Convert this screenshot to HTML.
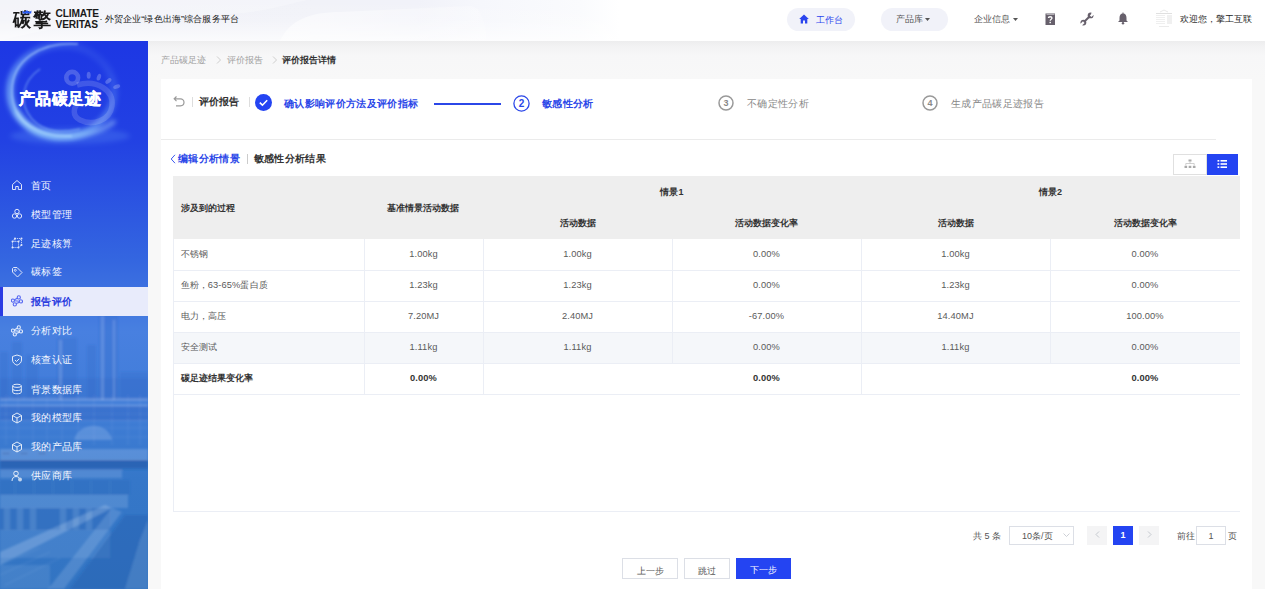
<!DOCTYPE html>
<html><head><meta charset="utf-8">
<style>
*{margin:0;padding:0;box-sizing:border-box}
html,body{width:1265px;height:589px;overflow:hidden;background:#f6f6f7;font-family:"Liberation Sans",sans-serif;color:#333}
.abs{position:absolute}
#hdr{position:absolute;left:0;top:0;width:1265px;height:41px;background:linear-gradient(180deg,rgba(255,255,255,0) 0%,rgba(255,255,255,.15) 50%,rgba(255,255,255,.7) 100%),linear-gradient(90deg,#eff0f7 0%,#f1f2f8 25%,#f1f2f9 33%,#f6f7fc 38%,#fafbfd 46%,#fff 49%,#fff 100%);overflow:hidden}
#side{position:absolute;left:0;top:41px;width:148px;height:548px;background:linear-gradient(180deg,#1d37e4 0%,#2241e3 18%,#3466e0 40%,#4880e0 53%,#417dd8 66%,#3577c9 80%,#3274c2 100%);overflow:hidden}
#main{position:absolute;left:148px;top:41px;width:1117px;height:548px;background:linear-gradient(180deg,#ededee 0px,#f3f3f4 6px,#f7f7f8 14px,#f8f8f8 40px)}
.nav{position:absolute;left:0;width:148px;height:29px;color:#f4f7ff;font-size:10px;line-height:29px;letter-spacing:0.3px}
.nav span{position:absolute;left:31px}
.nav svg{position:absolute;left:11px;top:8.5px;opacity:.85}
.nav.act{background:#e8ebfb;color:#2a3bdf;font-weight:bold}
.nav.act:before{content:"";position:absolute;left:0;top:0;width:3px;height:29px;background:#2a3be3}
#card{position:absolute;left:161px;top:79px;width:1091px;height:510px;background:#fff}
table{border-collapse:collapse;table-layout:fixed}
.th,.thc{font-size:9px;line-height:12px;font-weight:bold;color:#333}
.thc{text-align:center}
.td,.tdc{font-size:9.3px;line-height:12px;color:#5a5a5a;letter-spacing:0.1px}
.tdc{text-align:center}
.b{font-weight:bold;color:#333}
.btn{font-size:9px;line-height:24px;text-align:center}
</style></head><body>
<div id="hdr">
  <svg class="abs" style="left:0;top:0" width="1265" height="41"><defs><linearGradient id="hg" x1="0" y1="0" x2="1" y2="0"><stop offset="0" stop-color="#fff" stop-opacity=".55"/><stop offset="1" stop-color="#fff" stop-opacity=".2"/></linearGradient></defs><path d="M0 41 C40 30 90 22 150 18 L230 14 C270 12 300 0 310 0 L0 0 Z" fill="#fff" fill-opacity=".25"/><path d="M280 41 C290 20 310 12 340 12 L470 6 C480 6 485 20 487 41 Z" fill="url(#hg)"/></svg>
  <div class="abs" style="left:12.5px;top:8.5px;font-size:18px;font-weight:bold;color:#1a1a1a;letter-spacing:2px;line-height:22px;transform:scaleY(1.05)">碳擎</div>
  <svg class="abs" style="left:21.5px;top:10px" width="10" height="4" viewBox="0 0 10 4"><path d="M0.5 0.5 L0.8 3.5 H9.2 L9.5 0.5 L7.5 2 L5 0.3 L2.5 2 Z" fill="#2a5cf5"/></svg>
  <div class="abs" style="left:55.5px;top:9.3px;font-size:10.2px;line-height:10.3px;color:#1a1a1a;font-weight:bold;letter-spacing:-0.15px">CLIMATE<br>VERITAS</div>
  <div class="abs" style="left:99.5px;top:13px;font-size:9px;line-height:12px;color:#1a1a1a;white-space:nowrap;letter-spacing:0.15px">·<span style="margin-left:2px">外贸企业“绿色出海”综合服务平台</span></div>

  <div class="abs" style="left:787px;top:8px;width:68px;height:23px;border-radius:11.5px;background:#f1f2f9"></div>
  <svg class="abs" style="left:799px;top:14px" width="10" height="10" viewBox="0 0 10 10"><path d="M5 0.5 L9.8 5 H8.3 V9.5 H6 V6.5 H4 V9.5 H1.7 V5 H0.2 Z" fill="#2b45ee"/></svg>
  <div class="abs" style="left:816px;top:13.5px;font-size:9px;line-height:12px;color:#2b45ee;letter-spacing:0.2px">工作台</div>
  <div class="abs" style="left:881px;top:8px;width:67px;height:23px;border-radius:11.5px;background:#f1f2f9"></div>
  <div class="abs" style="left:896px;top:13px;font-size:9px;line-height:12px;color:#555">产品库</div>
  <svg class="abs" style="left:924.5px;top:17.5px" width="5" height="4"><path d="M0 0 H5 L2.5 3 Z" fill="#555"/></svg>
  <div class="abs" style="left:974px;top:13px;font-size:9px;line-height:12px;color:#555">企业信息</div>
  <svg class="abs" style="left:1012.5px;top:17.5px" width="5" height="4"><path d="M0 0 H5 L2.5 3 Z" fill="#555"/></svg>
  <svg class="abs" style="left:1045px;top:13px" width="10" height="12" viewBox="0 0 10 12"><rect x="0.5" y="0.5" width="9.5" height="11.5" fill="#67606c"/><rect x="1.5" y="1.2" width="8" height="0.7" fill="#fff" fill-opacity=".7"/><path d="M3.4 5 C3.4 3.3 7 3.3 7 5 C7 6.2 5.2 6.2 5.2 7.8" fill="none" stroke="#fff" stroke-width="1.3"/><rect x="4.5" y="8.8" width="1.4" height="1.4" fill="#fff"/></svg>
  <svg class="abs" style="left:1080px;top:12px" width="14" height="14" viewBox="0 0 14 14"><path d="M3.5 10.5 L10.5 3.5" stroke="#67606c" stroke-width="2"/><circle cx="10.6" cy="3.4" r="2.9" fill="#67606c"/><circle cx="3.4" cy="10.6" r="2.9" fill="#67606c"/><path d="M10.6 3.4 L13.5 0.5 L14 2.8 Z M10.6 3.4 L13.2 0 L11.8 0 Z" fill="#fff"/><rect x="10.2" y="-1" width="2.2" height="5" fill="#fff" transform="rotate(45 10.6 3.4)"/><rect x="2.2" y="10" width="2.2" height="5" fill="#fff" transform="rotate(45 3.4 10.6)"/></svg>
  <svg class="abs" style="left:1117px;top:12px" width="12" height="13" viewBox="0 0 12 13"><path d="M6 1.5 C3.5 1.5 2.5 3.5 2.5 6 V8.5 L1 10 H11 L9.5 8.5 V6 C9.5 3.5 8.5 1.5 6 1.5 Z" fill="#67606c"/><circle cx="6" cy="11.3" r="1.2" fill="#67606c"/><rect x="5.4" y="0.6" width="1.2" height="1.2" fill="#67606c"/></svg>
  <svg class="abs" style="left:1155px;top:9px" width="18" height="20" viewBox="0 0 18 20"><path d="M5 3 L9 1 L13 3" fill="none" stroke="#d0d0d0" stroke-width="0.5"/><rect x="1" y="4" width="16" height="1" fill="#e0e0e0"/><g fill="#ececec"><rect x="1" y="6" width="9" height="0.8"/><rect x="1" y="8" width="9" height="0.8"/><rect x="1" y="10" width="9" height="0.8"/><rect x="1" y="12" width="9" height="0.8"/><rect x="1" y="14" width="9" height="0.8"/><rect x="12" y="6" width="5" height="9" fill="#f0f0f0"/></g><rect x="4" y="17" width="10" height="0.8" fill="#e6e6e6"/></svg>
  <div class="abs" style="left:1180px;top:13px;font-size:9px;line-height:12px;color:#333;white-space:nowrap">欢迎您，<span style="color:#222">擎工互联</span></div>
</div>

<div id="side">
  <!-- photo overlay -->
  <svg class="abs" style="left:0;top:0" width="148" height="548" viewBox="0 0 148 548">
    <defs>
      <radialGradient id="glow" cx="0.5" cy="0.5" r="0.5">
        <stop offset="0.80" stop-color="#5aa8ff" stop-opacity="0"/>
        <stop offset="0.91" stop-color="#9ad6ff" stop-opacity="0.6"/>
        <stop offset="0.96" stop-color="#6fb8ff" stop-opacity="0.25"/>
        <stop offset="1" stop-color="#4f8fff" stop-opacity="0"/>
      </radialGradient>
      <radialGradient id="inner" cx="0.5" cy="0.5" r="0.5">
        <stop offset="0" stop-color="#1a30d8" stop-opacity="0.3"/>
        <stop offset="1" stop-color="#1a30d8" stop-opacity="0"/>
      </radialGradient>
      <linearGradient id="ph" x1="0" y1="0" x2="0" y2="1">
        <stop offset="0" stop-color="#3f78dc" stop-opacity="0"/>
        <stop offset="0.15" stop-color="#3f78dc" stop-opacity="1"/>
        <stop offset="1" stop-color="#3a7bd0" stop-opacity="1"/>
      </linearGradient>
    </defs>
    <filter id="blur2" x="-20%" y="-20%" width="140%" height="140%"><feGaussianBlur stdDeviation="2.5"/></filter>
    <filter id="blur1" x="-20%" y="-20%" width="140%" height="140%"><feGaussianBlur stdDeviation="0.8"/></filter>
    <linearGradient id="rg" x1="0" y1="1" x2="0.9" y2="0"><stop offset="0" stop-color="#9ad8ff" stop-opacity=".85"/><stop offset="0.5" stop-color="#8fd0ff" stop-opacity=".45"/><stop offset="1" stop-color="#8fd0ff" stop-opacity="0"/></linearGradient>
    <ellipse cx="62" cy="50" rx="52" ry="46" fill="none" stroke="url(#rg)" stroke-width="7" filter="url(#blur2)"/>
    <path d="M78 3 C40 0 12 20 12 50 C12 82 40 97 72 95" fill="none" stroke="#c8ecff" stroke-opacity=".6" stroke-width="1.4" filter="url(#blur1)"/>
    <path d="M16 70 C25 88 45 96 72 95 C90 94 105 88 115 80" fill="none" stroke="#b8e6ff" stroke-opacity=".65" stroke-width="3.5" filter="url(#blur2)"/>
    <path d="M40 28 C22 40 18 62 32 78 C45 92 62 92 80 88" fill="none" stroke="#aee0ff" stroke-opacity=".45" stroke-width="1.4" filter="url(#blur1)"/>
    <ellipse cx="70" cy="95" rx="60" ry="8" fill="#7fc0ff" fill-opacity=".18" filter="url(#blur2)"/>
    <circle cx="72.2" cy="36.8" r="5.9" fill="none" stroke="#fff" stroke-opacity=".2" stroke-width="4.6"/>
    <path d="M77 44 C98 38 114 50 112 65 C110 80 92 85 80 79 C72 75 73 66 79 62" fill="none" stroke="#fff" stroke-opacity=".15" stroke-width="5.5"/>
    <g fill="#fff" fill-opacity=".22">
      <ellipse cx="88.7" cy="34.3" rx="2" ry="3.5"/>
      <ellipse cx="98.9" cy="36.2" rx="2" ry="3.5" transform="rotate(20 98.9 36.2)"/>
      <ellipse cx="108.4" cy="40" rx="2" ry="3.6" transform="rotate(50 108.4 40)"/>
      <ellipse cx="116.7" cy="45.7" rx="2" ry="3.6" transform="rotate(70 116.7 45.7)"/>
    </g>
    <!-- refinery -->
    <g filter="url(#blur1)">
    
    <g fill="#2c5fc0" fill-opacity=".2">
      <rect x="99" y="273" width="19" height="86"/>
      <rect x="57" y="297" width="20" height="62"/>
      <rect x="87" y="304" width="9" height="55"/>
      <rect x="0" y="311" width="8" height="48"/>
      <rect x="12" y="301" width="10" height="58"/>
      <rect x="26" y="314" width="12" height="45"/>
      <rect x="120" y="331" width="28" height="28"/>
      <rect x="0" y="337" width="148" height="22"/>
    </g>
    <g fill="#dbe9ff" fill-opacity=".18">
      <rect x="101" y="275" width="3" height="84"/>
      <rect x="113" y="279" width="2" height="80"/>
      <rect x="59" y="299" width="3" height="60"/>
      <rect x="0" y="357" width="148" height="3"/>
      <rect x="0" y="363" width="148" height="2"/>
    </g>
    <rect x="0" y="365" width="148" height="14" fill="#2a5cb8" fill-opacity=".3"/>
    
    <g stroke="#e6f0ff" stroke-opacity=".10" stroke-width="0.8">
      <path d="M0 359 H148 M0 366 H148 M0 373 H148 M0 380 H148 M0 387 H148 M0 396 H148"/>
      <path d="M6 354 V404 M18 354 V404 M33 354 V404 M47 354 V404 M62 354 V404 M78 354 V404 M94 354 V404 M112 354 V404 M128 354 V404 M140 354 V404"/>
    </g>
    <path d="M74 399 C78 381 108 379 112 399 Z" fill="#e0ecff" fill-opacity=".18"/>
    <g fill="#1d4f9c" fill-opacity=".35">
      <rect x="2" y="411" width="8" height="3"/><rect x="20" y="411" width="8" height="3"/><rect x="38" y="411" width="8" height="3"/>
      <rect x="0" y="419" width="148" height="8"/>
    </g>
    <g stroke="#e6f0ff" stroke-opacity=".13" stroke-width="0.8">
      <path d="M15 439 V454 M34 439 V454 M53 439 V454 M72 439 V454 M91 439 V454 M110 439 V454"/>
      <path d="M0 524 L40 507 M0 534 L50 511 M5 544 L60 517"/>
    </g>
    <rect x="0" y="408" width="148" height="11" fill="#d8e8ff" fill-opacity=".2"/>
    <rect x="0" y="419" width="148" height="10" fill="#1f58a8" fill-opacity=".3"/>
    <rect x="0" y="429" width="122" height="8" fill="#d8e8ff" fill-opacity=".16"/>
    <rect x="0" y="439" width="130" height="15" fill="#2560b0" fill-opacity=".2"/>
    <rect x="0" y="454" width="128" height="13" fill="#d8e8ff" fill-opacity=".17"/>
    <rect x="0" y="467" width="110" height="22" fill="#2a62b5" fill-opacity=".25"/>
    <g fill="#d8e8ff" fill-opacity=".14">
      <rect x="4" y="467" width="6" height="22"/><rect x="17" y="467" width="6" height="22"/><rect x="30" y="467" width="6" height="22"/><rect x="60" y="467" width="6" height="22"/><rect x="73" y="467" width="6" height="22"/><rect x="86" y="467" width="6" height="22"/>
    </g>
    <rect x="0" y="489" width="110" height="28" fill="#d0e2ff" fill-opacity=".1"/>
    <path d="M0 511 L105 464 L112 467 L0 524 Z" fill="#e0ecff" fill-opacity=".22"/>
    <path d="M48 548 L112 467 L122 471 L64 548 Z" fill="#e0ecff" fill-opacity=".16"/>
    <path d="M70 548 L125 474 L148 474 L148 548 Z" fill="#1d55a5" fill-opacity=".3"/>
    <path d="M125 548 L140 499 L148 479 L148 548 Z" fill="#d8e8ff" fill-opacity=".14"/>
    <rect x="0" y="524" width="50" height="24" fill="#d8e8ff" fill-opacity=".1"/>
    </g>
  </svg>
  <div class="nav" style="top:129.5px"><svg width="12" height="12" viewBox="0 0 12 12"><path d="M1.5 5.5 L6 1.5 L10.5 5.5 V10.5 H7.3 V7.5 H4.7 V10.5 H1.5 Z" fill="none" stroke="#fff" stroke-width="1"/></svg><span>首页</span></div>
  <div class="nav" style="top:158.5px"><svg width="12" height="12" viewBox="0 0 12 12"><circle cx="6" cy="3.5" r="2.2" fill="none" stroke="#fff" stroke-width="1"/><circle cx="3.5" cy="8" r="2.2" fill="none" stroke="#fff" stroke-width="1"/><circle cx="8.5" cy="8" r="2.2" fill="none" stroke="#fff" stroke-width="1"/></svg><span>模型管理</span></div>
  <div class="nav" style="top:187.5px"><svg width="12" height="12" viewBox="0 0 12 12"><path d="M1.5 4.5 H7.5 V10.5 H1.5 Z M4 1.5 H10.5 V8 M4 1.5 V4.5 M1.5 4.5 L4 1.5 M7.5 4.5 L10.5 1.5 M7.5 10.5 L10.5 8" fill="none" stroke="#fff" stroke-width="0.8" stroke-dasharray="1.2 0.8"/><g fill="#fff"><circle cx="1.5" cy="4.5" r="1"/><circle cx="7.5" cy="4.5" r="1"/><circle cx="1.5" cy="10.5" r="1"/><circle cx="7.5" cy="10.5" r="1"/><circle cx="4" cy="1.5" r="1"/><circle cx="10.5" cy="1.5" r="1"/><circle cx="10.5" cy="8" r="1"/></g></svg><span>足迹核算</span></div>
  <div class="nav" style="top:216.0px"><svg width="12" height="12" viewBox="0 0 12 12"><path d="M1.5 2.5 V6 L6.5 11 L11 6.5 L6 1.5 H2.5 Z" fill="none" stroke="#fff" stroke-width="1"/><circle cx="4.3" cy="4.3" r="1" fill="none" stroke="#fff" stroke-width="0.9"/></svg><span>碳标签</span></div>
  <div class="nav act" style="top:245.5px"><svg width="12" height="12" viewBox="0 0 12 12"><circle cx="7.8" cy="2.4" r="1.6" fill="none" stroke="#3a4ff0" stroke-width="1.1"/><circle cx="1.9" cy="5.6" r="1.6" fill="none" stroke="#3a4ff0" stroke-width="1.1"/><circle cx="9.9" cy="6.4" r="1.6" fill="none" stroke="#3a4ff0" stroke-width="1.1"/><circle cx="3.8" cy="9.4" r="1.6" fill="none" stroke="#3a4ff0" stroke-width="1.1"/><path d="M3.3 4.8 L6.4 3.2 M3.4 5.8 L8.4 6.2 M8.6 7.3 L5.2 8.6" stroke="#3a4ff0" stroke-width="1.1"/></svg><span>报告评价</span></div>
  <div class="nav" style="top:275.0px"><svg width="12" height="12" viewBox="0 0 12 12"><circle cx="7.8" cy="2.4" r="1.6" fill="none" stroke="#fff" stroke-width="1.1"/><circle cx="1.9" cy="5.6" r="1.6" fill="none" stroke="#fff" stroke-width="1.1"/><circle cx="9.9" cy="6.4" r="1.6" fill="none" stroke="#fff" stroke-width="1.1"/><circle cx="3.8" cy="9.4" r="1.6" fill="none" stroke="#fff" stroke-width="1.1"/><path d="M3.3 4.8 L6.4 3.2 M3.4 5.8 L8.4 6.2 M8.6 7.3 L5.2 8.6" stroke="#fff" stroke-width="1.1"/></svg><span>分析对比</span></div>
  <div class="nav" style="top:304.0px"><svg width="12" height="12" viewBox="0 0 12 12"><path d="M6 1 L10.5 2.5 V6 C10.5 8.5 8.5 10.3 6 11.2 C3.5 10.3 1.5 8.5 1.5 6 V2.5 Z" fill="none" stroke="#fff" stroke-width="1"/><path d="M4 6 L5.5 7.5 L8.2 4.8" fill="none" stroke="#fff" stroke-width="1"/></svg><span>核查认证</span></div>
  <div class="nav" style="top:333.5px"><svg width="12" height="12" viewBox="0 0 12 12"><ellipse cx="6" cy="2.8" rx="4.3" ry="1.6" fill="none" stroke="#fff" stroke-width="1"/><path d="M1.7 2.8 V9.2 C1.7 10.1 3.6 10.8 6 10.8 C8.4 10.8 10.3 10.1 10.3 9.2 V2.8 M1.7 6 C1.7 6.9 3.6 7.6 6 7.6 C8.4 7.6 10.3 6.9 10.3 6" fill="none" stroke="#fff" stroke-width="1"/></svg><span>背景数据库</span></div>
  <div class="nav" style="top:362.0px"><svg width="12" height="12" viewBox="0 0 12 12"><path d="M6 1 L10.5 3.5 V8.5 L6 11 L1.5 8.5 V3.5 Z M1.5 3.5 L6 6 L10.5 3.5 M6 6 V11" fill="none" stroke="#fff" stroke-width="1"/></svg><span>我的模型库</span></div>
  <div class="nav" style="top:391.0px"><svg width="12" height="12" viewBox="0 0 12 12"><path d="M6 1 L10.5 3.5 V8.5 L6 11 L1.5 8.5 V3.5 Z M1.5 3.5 L6 6 L10.5 3.5 M6 6 V11" fill="none" stroke="#fff" stroke-width="1"/></svg><span>我的产品库</span></div>
  <div class="nav" style="top:420.0px"><svg width="12" height="12" viewBox="0 0 12 12"><circle cx="5" cy="3.5" r="2.3" fill="none" stroke="#fff" stroke-width="1"/><path d="M1 11 C1 8 3 6.5 5 6.5 C6.5 6.5 7.5 7 8.2 7.8" fill="none" stroke="#fff" stroke-width="1"/><circle cx="9" cy="9.5" r="2" fill="#fff" opacity=".8"/></svg><span>供应商库</span></div>
  <div class="abs" style="left:18.5px;top:48px;font-size:16px;line-height:16px;color:#fff;font-weight:bold;-webkit-text-stroke:0.4px #fff;letter-spacing:0.5px;margin-top:2px">产品碳足迹</div>
</div>

<div id="main"></div>
<div class="abs" style="left:161px;top:54px;font-size:9.1px;line-height:12px;color:#a0a0a0">产品碳足迹</div>
<svg class="abs" style="left:216px;top:56px" width="6" height="8"><path d="M1 0.5 L4.5 4 L1 7.5" fill="none" stroke="#c8c8c8" stroke-width="0.9"/></svg>
<div class="abs" style="left:226.5px;top:54px;font-size:9.1px;line-height:12px;color:#a0a0a0">评价报告</div>
<svg class="abs" style="left:272px;top:56px" width="6" height="8"><path d="M1 0.5 L4.5 4 L1 7.5" fill="none" stroke="#c8c8c8" stroke-width="0.9"/></svg>
<div class="abs" style="left:282px;top:54px;font-size:9.1px;line-height:12px;color:#333;font-weight:bold">评价报告详情</div>
<div id="card"></div>
<!-- steps -->
<svg class="abs" style="left:173px;top:95px" width="13" height="12" viewBox="0 0 13 12"><path d="M3.5 1.5 L1.2 3.8 L3.5 6.1 M1.5 3.8 H7.5 A3.5 3.5 0 0 1 7.5 10.8 H3" fill="none" stroke="#9a9a9a" stroke-width="1.2"/></svg>
<div class="abs" style="left:192px;top:97px;width:1px;height:10px;background:#ddd"></div>
<div class="abs" style="left:199px;top:95px;font-size:10px;line-height:13px;font-weight:bold;color:#333">评价报告</div>
<div class="abs" style="left:249px;top:97px;width:1px;height:10px;background:#ddd"></div>
<svg class="abs" style="left:255px;top:94px" width="17" height="17" viewBox="0 0 17 17"><circle cx="8.5" cy="8.5" r="8.5" fill="#2444f2"/><path d="M4.8 8.7 L7.4 11.2 L12.2 6.2" fill="none" stroke="#fff" stroke-width="1.6"/></svg>
<div class="abs" style="left:284px;top:97px;font-size:10px;line-height:13px;font-weight:bold;color:#2b47e8;letter-spacing:0.35px">确认影响评价方法及评价指标</div>
<div class="abs" style="left:434px;top:103px;width:67px;height:1.5px;background:#2b47e8"></div>
<svg class="abs" style="left:513px;top:95px" width="17" height="17" viewBox="0 0 17 17"><circle cx="8.5" cy="8.5" r="7.6" fill="none" stroke="#2b47e8" stroke-width="1.3"/><text x="8.5" y="12" text-anchor="middle" font-size="10" font-weight="bold" fill="#2b47e8" font-family="Liberation Sans">2</text></svg>
<div class="abs" style="left:542px;top:97px;font-size:10px;line-height:13px;font-weight:bold;color:#2b47e8;letter-spacing:0.35px">敏感性分析</div>
<svg class="abs" style="left:718px;top:95px" width="16" height="16" viewBox="0 0 16 16"><circle cx="8" cy="8" r="7" fill="none" stroke="#999" stroke-width="1.5"/><text x="8" y="11.2" text-anchor="middle" font-size="9" font-weight="bold" fill="#888" font-family="Liberation Sans">3</text></svg>
<div class="abs" style="left:747px;top:97px;font-size:10px;line-height:13px;color:#888;letter-spacing:0.35px">不确定性分析</div>
<svg class="abs" style="left:922px;top:95px" width="16" height="16" viewBox="0 0 16 16"><circle cx="8" cy="8" r="7" fill="none" stroke="#999" stroke-width="1.5"/><text x="8" y="11.2" text-anchor="middle" font-size="9" font-weight="bold" fill="#888" font-family="Liberation Sans">4</text></svg>
<div class="abs" style="left:951px;top:97px;font-size:10px;line-height:13px;color:#888;letter-spacing:0.35px">生成产品碳足迹报告</div>
<div class="abs" style="left:161px;top:139px;width:1055px;height:1px;background:#ebebeb"></div>
<!-- sub title -->
<svg class="abs" style="left:170px;top:154px" width="6" height="10"><path d="M5 0.8 L1.2 5 L5 9.2" fill="none" stroke="#3d5af0" stroke-width="1"/></svg>
<div class="abs" style="left:178px;top:152px;font-size:10px;line-height:13px;font-weight:bold;color:#2b47e8;letter-spacing:0.35px">编辑分析情景</div>
<div class="abs" style="left:247px;top:154px;width:1px;height:10px;background:#ccc"></div>
<div class="abs" style="left:253.5px;top:152px;font-size:10px;line-height:13px;font-weight:bold;color:#333;letter-spacing:0.37px">敏感性分析结果</div>
<!-- toggles -->
<div class="abs" style="left:1173px;top:153.5px;width:34px;height:21.5px;border:1px solid #e0e0e0;background:#fff"></div>
<div class="abs" style="left:1207px;top:153.5px;width:31px;height:21.5px;background:#2444f2"></div>
<svg class="abs" style="left:1184px;top:159px" width="12" height="10" viewBox="0 0 12 10"><rect x="4.5" y="0.5" width="3" height="2" fill="#aaa"/><path d="M6 2.5 V4.5 M1.8 6.5 V4.5 H10.2 V6.5" fill="none" stroke="#bbb" stroke-width="0.7"/><rect x="0.5" y="6.8" width="2.6" height="2.2" fill="#aaa"/><rect x="4.7" y="6.8" width="2.6" height="2.2" fill="#aaa"/><rect x="8.9" y="6.8" width="2.6" height="2.2" fill="#aaa"/></svg>
<svg class="abs" style="left:1217px;top:159px" width="11" height="10" viewBox="0 0 11 10"><g fill="#fff"><rect x="0.5" y="1" width="1.8" height="1.6"/><rect x="3.5" y="1" width="6.5" height="1.6"/><rect x="0.5" y="4.2" width="1.8" height="1.6"/><rect x="3.5" y="4.2" width="6.5" height="1.6"/><rect x="0.5" y="7.4" width="1.8" height="1.6"/><rect x="3.5" y="7.4" width="6.5" height="1.6"/></g></svg>
<!-- table -->
<div class="abs" style="left:173px;top:176px;width:1067px;height:336px;border-left:1px solid #ebeef5;border-bottom:1px solid #ebeef5"></div>
<div class="abs" style="left:173px;top:176px;width:1067px;height:63px;background:#eeeeee"></div>
<div class="abs th" style="left:181px;top:202px">涉及到的过程</div>
<div class="abs th" style="left:387px;top:202px">基准情景活动数据</div>
<div class="abs thc" style="left:483px;width:378px;top:186px">情景1</div>
<div class="abs thc" style="left:483px;width:189px;top:217px">活动数据</div>
<div class="abs thc" style="left:672px;width:189px;top:217px">活动数据变化率</div>
<div class="abs thc" style="left:861px;width:379px;top:186px">情景2</div>
<div class="abs thc" style="left:861px;width:189px;top:217px">活动数据</div>
<div class="abs thc" style="left:1050px;width:190px;top:217px">活动数据变化率</div>
<div class="abs" style="left:174px;top:270px;width:1066px;height:1px;background:#ebeef5"></div>
<div class="abs" style="left:364px;top:239px;width:1px;height:31px;background:#ebeef5"></div>
<div class="abs" style="left:483px;top:239px;width:1px;height:31px;background:#ebeef5"></div>
<div class="abs" style="left:672px;top:239px;width:1px;height:31px;background:#ebeef5"></div>
<div class="abs" style="left:861px;top:239px;width:1px;height:31px;background:#ebeef5"></div>
<div class="abs" style="left:1050px;top:239px;width:1px;height:31px;background:#ebeef5"></div>
<div class="abs td" style="left:180.5px;top:248px">不锈钢</div>
<div class="abs tdc" style="left:364px;width:119px;top:248px">1.00kg</div>
<div class="abs tdc" style="left:483px;width:189px;top:248px">1.00kg</div>
<div class="abs tdc" style="left:672px;width:189px;top:248px">0.00%</div>
<div class="abs tdc" style="left:861px;width:189px;top:248px">1.00kg</div>
<div class="abs tdc" style="left:1050px;width:190px;top:248px">0.00%</div>
<div class="abs" style="left:174px;top:301px;width:1066px;height:1px;background:#ebeef5"></div>
<div class="abs" style="left:364px;top:270px;width:1px;height:31px;background:#ebeef5"></div>
<div class="abs" style="left:483px;top:270px;width:1px;height:31px;background:#ebeef5"></div>
<div class="abs" style="left:672px;top:270px;width:1px;height:31px;background:#ebeef5"></div>
<div class="abs" style="left:861px;top:270px;width:1px;height:31px;background:#ebeef5"></div>
<div class="abs" style="left:1050px;top:270px;width:1px;height:31px;background:#ebeef5"></div>
<div class="abs td" style="left:180.5px;top:279px">鱼粉，63-65%蛋白质</div>
<div class="abs tdc" style="left:364px;width:119px;top:279px">1.23kg</div>
<div class="abs tdc" style="left:483px;width:189px;top:279px">1.23kg</div>
<div class="abs tdc" style="left:672px;width:189px;top:279px">0.00%</div>
<div class="abs tdc" style="left:861px;width:189px;top:279px">1.23kg</div>
<div class="abs tdc" style="left:1050px;width:190px;top:279px">0.00%</div>
<div class="abs" style="left:174px;top:332px;width:1066px;height:1px;background:#ebeef5"></div>
<div class="abs" style="left:364px;top:301px;width:1px;height:31px;background:#ebeef5"></div>
<div class="abs" style="left:483px;top:301px;width:1px;height:31px;background:#ebeef5"></div>
<div class="abs" style="left:672px;top:301px;width:1px;height:31px;background:#ebeef5"></div>
<div class="abs" style="left:861px;top:301px;width:1px;height:31px;background:#ebeef5"></div>
<div class="abs" style="left:1050px;top:301px;width:1px;height:31px;background:#ebeef5"></div>
<div class="abs td" style="left:180.5px;top:310px">电力，高压</div>
<div class="abs tdc" style="left:364px;width:119px;top:310px">7.20MJ</div>
<div class="abs tdc" style="left:483px;width:189px;top:310px">2.40MJ</div>
<div class="abs tdc" style="left:672px;width:189px;top:310px">-67.00%</div>
<div class="abs tdc" style="left:861px;width:189px;top:310px">14.40MJ</div>
<div class="abs tdc" style="left:1050px;width:190px;top:310px">100.00%</div>
<div class="abs" style="left:174px;top:333px;width:1066px;height:30px;background:#f5f7fa"></div>
<div class="abs" style="left:174px;top:363px;width:1066px;height:1px;background:#ebeef5"></div>
<div class="abs" style="left:364px;top:332px;width:1px;height:31px;background:#ebeef5"></div>
<div class="abs" style="left:483px;top:332px;width:1px;height:31px;background:#ebeef5"></div>
<div class="abs" style="left:672px;top:332px;width:1px;height:31px;background:#ebeef5"></div>
<div class="abs" style="left:861px;top:332px;width:1px;height:31px;background:#ebeef5"></div>
<div class="abs" style="left:1050px;top:332px;width:1px;height:31px;background:#ebeef5"></div>
<div class="abs td" style="left:180.5px;top:341px">安全测试</div>
<div class="abs tdc" style="left:364px;width:119px;top:341px">1.11kg</div>
<div class="abs tdc" style="left:483px;width:189px;top:341px">1.11kg</div>
<div class="abs tdc" style="left:672px;width:189px;top:341px">0.00%</div>
<div class="abs tdc" style="left:861px;width:189px;top:341px">1.11kg</div>
<div class="abs tdc" style="left:1050px;width:190px;top:341px">0.00%</div>
<div class="abs" style="left:174px;top:394px;width:1066px;height:1px;background:#ebeef5"></div>
<div class="abs" style="left:364px;top:363px;width:1px;height:31px;background:#ebeef5"></div>
<div class="abs" style="left:483px;top:363px;width:1px;height:31px;background:#ebeef5"></div>
<div class="abs" style="left:861px;top:363px;width:1px;height:31px;background:#ebeef5"></div>
<div class="abs td b" style="left:180.5px;top:372px">碳足迹结果变化率</div>
<div class="abs tdc b" style="left:364px;width:119px;top:372px">0.00%</div>
<div class="abs tdc b" style="left:672px;width:189px;top:372px">0.00%</div>
<div class="abs tdc b" style="left:1050px;width:190px;top:372px">0.00%</div>
<!-- pagination -->
<div class="abs" style="left:973px;top:530px;font-size:9px;line-height:12px;color:#555;white-space:nowrap">共 5 条</div>
<div class="abs" style="left:1009px;top:526px;width:65px;height:19px;border:1px solid #dcdfe6"></div>
<div class="abs" style="left:1022px;top:530px;font-size:9px;line-height:12px;color:#555;white-space:nowrap">10条/页</div>
<svg class="abs" style="left:1063px;top:533px" width="7" height="5"><path d="M0.5 0.5 L3.5 3.5 L6.5 0.5" fill="none" stroke="#c0c4cc" stroke-width="0.8"/></svg>
<div class="abs" style="left:1087px;top:526px;width:20px;height:19px;background:#f4f4f5"></div>
<svg class="abs" style="left:1095px;top:531px" width="5" height="7"><path d="M4 0.5 L1 3.5 L4 6.5" fill="none" stroke="#c0c4cc" stroke-width="0.9"/></svg>
<div class="abs" style="left:1113px;top:526px;width:20px;height:19px;background:#2444f2;color:#fff;font-size:9px;font-weight:bold;line-height:19px;text-align:center">1</div>
<div class="abs" style="left:1139px;top:526px;width:20px;height:19px;background:#f4f4f5"></div>
<svg class="abs" style="left:1147px;top:531px" width="5" height="7"><path d="M1 0.5 L4 3.5 L1 6.5" fill="none" stroke="#c0c4cc" stroke-width="0.9"/></svg>
<div class="abs" style="left:1177px;top:530px;font-size:9px;line-height:12px;color:#555;white-space:nowrap">前往</div>
<div class="abs" style="left:1196px;top:526px;width:30px;height:19px;border:1px solid #dcdfe6;font-size:9px;line-height:19px;text-align:center;color:#555">1</div>
<div class="abs" style="left:1228px;top:530px;font-size:9px;line-height:12px;color:#555">页</div>
<!-- buttons -->
<div class="abs btn" style="left:622px;top:558px;width:56px;height:21px;border:1px solid #dcdfe6;color:#555">上一步</div>
<div class="abs btn" style="left:684px;top:558px;width:46px;height:21px;border:1px solid #dcdfe6;color:#555">跳过</div>
<div class="abs btn" style="left:736px;top:558px;width:55px;height:21px;background:#2444f2;color:#fff">下一步</div>
</body></html>
